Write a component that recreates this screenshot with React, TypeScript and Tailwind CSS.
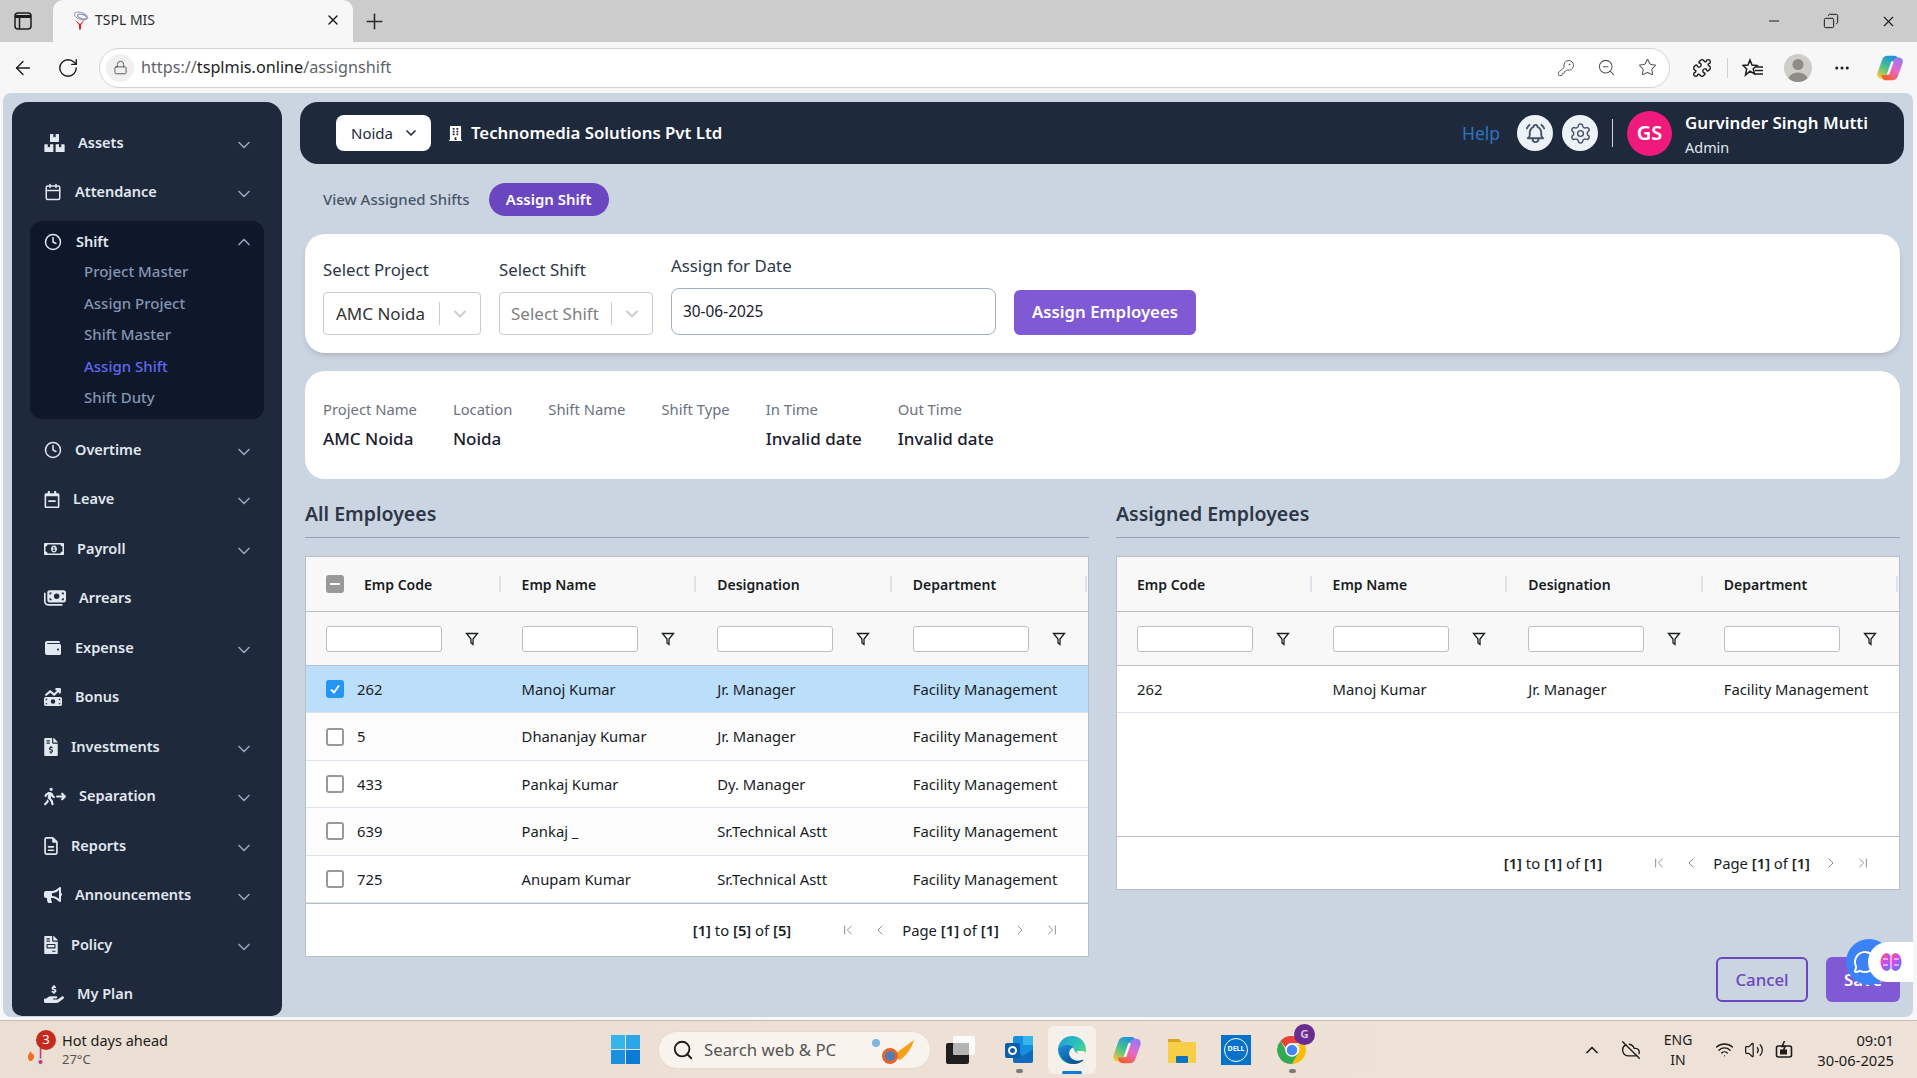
import { ReactNode } from 'react';
import {
  ArrowLeft,
  Calendar,
  ChevronDown,
  ChevronFirst,
  ChevronLast,
  ChevronLeft,
  ChevronRight,
  ChevronUp,
  Clock,
  CloudOff,
  Copy,
  KeyRound,
  Lock,
  MessageCircle,
  Minus,
  MoreHorizontal,
  Plus,
  Puzzle,
  RotateCw,
  Search,
  Settings,
  Star,
  Volume2,
  Wifi,
  X,
  ZoomOut,
} from 'lucide-react';
import { FaBoxes, FaBuilding, FaFileInvoice, FaFileInvoiceDollar, FaBullhorn, FaRegCalendarMinus, FaRegMoneyBillAlt, FaWallet } from 'react-icons/fa';
import { FaHandHoldingDollar, FaMoneyBills, FaMoneyBillTrendUp, FaPersonWalkingArrowRight, FaRegFileLines } from 'react-icons/fa6';
import { TbBellRinging } from 'react-icons/tb';

interface NavItem {
  label: string;
  icon: ReactNode;
  arrow?: boolean;
}

interface Employee {
  code: string;
  name: string;
  designation: string;
  department: string;
}

const iconClass = 'shrink-0 text-[#e2e8f0]';

const topItems: NavItem[] = [
  { label: 'Assets', icon: <FaBoxes className={`${iconClass} w-[21px] h-[18px]`} />, arrow: true },
  { label: 'Attendance', icon: <Calendar className={`${iconClass} w-[18px] h-[18px]`} strokeWidth={2} />, arrow: true },
];

const shiftLinks = ['Project Master', 'Assign Project', 'Shift Master', 'Assign Shift', 'Shift Duty'];

const bottomItems: NavItem[] = [
  { label: 'Overtime', icon: <Clock className={`${iconClass} w-[18px] h-[18px]`} />, arrow: true },
  { label: 'Leave', icon: <FaRegCalendarMinus className={`${iconClass} w-[16px] h-[17px]`} />, arrow: true },
  { label: 'Payroll', icon: <FaRegMoneyBillAlt className={`${iconClass} w-[20px] h-[18px]`} />, arrow: true },
  { label: 'Arrears', icon: <FaMoneyBills className={`${iconClass} w-[22px] h-[18px]`} /> },
  { label: 'Expense', icon: <FaWallet className={`${iconClass} w-[18px] h-[16px]`} />, arrow: true },
  { label: 'Bonus', icon: <FaMoneyBillTrendUp className={`${iconClass} w-[18px] h-[18px]`} /> },
  { label: 'Investments', icon: <FaFileInvoiceDollar className={`${iconClass} w-[14px] h-[18px]`} />, arrow: true },
  { label: 'Separation', icon: <FaPersonWalkingArrowRight className={`${iconClass} w-[22px] h-[19px]`} />, arrow: true },
  { label: 'Reports', icon: <FaRegFileLines className={`${iconClass} w-[14px] h-[18px]`} />, arrow: true },
  { label: 'Announcements', icon: <FaBullhorn className={`${iconClass} w-[18px] h-[18px]`} />, arrow: true },
  { label: 'Policy', icon: <FaFileInvoice className={`${iconClass} w-[14px] h-[18px]`} />, arrow: true },
  { label: 'My Plan', icon: <FaHandHoldingDollar className={`${iconClass} w-[20px] h-[18px]`} /> },
];

const allEmployees: Employee[] = [
  { code: '262', name: 'Manoj Kumar', designation: 'Jr. Manager', department: 'Facility Management' },
  { code: '5', name: 'Dhananjay Kumar', designation: 'Jr. Manager', department: 'Facility Management' },
  { code: '433', name: 'Pankaj Kumar', designation: 'Dy. Manager', department: 'Facility Management' },
  { code: '639', name: 'Pankaj _', designation: 'Sr.Technical Astt', department: 'Facility Management' },
  { code: '725', name: 'Anupam Kumar', designation: 'Sr.Technical Astt', department: 'Facility Management' },
];

const shiftInfo = [
  { label: 'Project Name', value: 'AMC Noida' },
  { label: 'Location', value: 'Noida' },
  { label: 'Shift Name', value: '' },
  { label: 'Shift Type', value: '' },
  { label: 'In Time', value: 'Invalid date' },
  { label: 'Out Time', value: 'Invalid date' },
];

function Favicon() {
  return (
    <svg viewBox="0 0 20 20" className="w-[20px] h-[20px] shrink-0" fill="none">
      <ellipse cx="10" cy="6" rx="7" ry="3.400" stroke="#9a9cc0" strokeWidth="1" transform="rotate(18 10 6)" />
      <ellipse cx="11" cy="6.500" rx="4.500" ry="2" stroke="#7d8cb8" strokeWidth="1" transform="rotate(18 11 6.500)" />
      <path d="M4 10l5 4 5-5-4 6v4.500H8V15z" fill="#e4202c" />
    </svg>
  );
}

function CopilotIcon({ size, id }: { size: string; id: string }) {
  return (
    <svg viewBox="0 0 32 32" className={size}>
      <defs>
        <linearGradient id={`${id}A`} x1="0.7" y1="0" x2="0.2" y2="1">
          <stop offset="0" stopColor="#1a8fe3" />
          <stop offset="0.55" stopColor="#4cc48a" />
          <stop offset="1" stopColor="#f5c83a" />
        </linearGradient>
        <linearGradient id={`${id}B`} x1="0.7" y1="0" x2="0.2" y2="1">
          <stop offset="0" stopColor="#f4602f" />
          <stop offset="0.5" stopColor="#e668cf" />
          <stop offset="1" stopColor="#8f7bf0" />
        </linearGradient>
      </defs>
      <path d="M13 2h8c2 0 3.500 1.500 4 3l1 3h-6c-1.500 0-2.500 1-3 2l-4 12-1 3c-.7 2-2 3-4 3H6C2.500 28 .8 25 1.500 22L7 6.500C8 3.500 10.500 2 13 2z" fill={`url(#${id}A)`} />
      <path d="M13 2h8c2 0 3.500 1.500 4 3l1 3h-6c-1.500 0-2.500 1-3 2l-4 12-1 3c-.7 2-2 3-4 3H6C2.500 28 .8 25 1.500 22L7 6.500C8 3.500 10.500 2 13 2z" fill={`url(#${id}B)`} transform="rotate(180 16 16)" />
      <path d="M19 9l-5 14" stroke="#fff" strokeWidth="2.500" opacity="0.8" />
    </svg>
  );
}

function EdgeIcon() {
  return (
    <svg viewBox="0 0 30 30" className="w-[30px] h-[30px]">
      <defs>
        <linearGradient id="edgeA" x1="0" y1="0" x2="1" y2="0.8">
          <stop offset="0" stopColor="#1f9cd8" />
          <stop offset="0.6" stopColor="#2fc6b4" />
          <stop offset="1" stopColor="#6fdc5c" />
        </linearGradient>
        <linearGradient id="edgeB" x1="0" y1="0" x2="0.6" y2="1">
          <stop offset="0" stopColor="#1c8fdc" />
          <stop offset="1" stopColor="#0b4f96" />
        </linearGradient>
      </defs>
      <circle cx="15" cy="15" r="14" fill="url(#edgeA)" />
      <path d="M1.500 14C2 21 7 29 17 29c4 0 8-1.500 10.500-5-3 1.500-7 2-10 1-4-1.500-6-5-5-8.500.5-2 2-3.500 4-4-1-1.500-3-2.500-5.500-2.500C6 10 2.500 11.500 1.500 14z" fill="url(#edgeB)" />
      <path d="M16.500 12.500c-2 .5-3.500 2-4 4-1 3.500 1 7 5 8.500 3 1 7 .5 10-1 1-1.500 1.500-3 1.500-5 0-1.500-1-3-4-3h-5c-.5 1 .5 2 2 2.500-3 0-5.500-3-5.500-6z" fill="#f7f0ea" />
    </svg>
  );
}

function ChromeIcon() {
  return (
    <svg viewBox="0 0 30 30" className="w-[30px] h-[30px]">
      <path d="M15 1a14 14 0 0 1 12.100 7H15a7 7 0 0 0-6.500 4.400L3.500 6A14 14 0 0 1 15 1z" fill="#e94335" />
      <path d="M27.100 8A14 14 0 0 1 15 29l6-10.500A7 7 0 0 0 21 10l6.100-2z" fill="#fbbc05" />
      <path d="M3.500 6l6 10.500A7 7 0 0 0 21 18.500L15 29A14 14 0 0 1 3.500 6z" fill="#34a853" />
      <circle cx="15" cy="15" r="6" fill="#4285f4" stroke="#fff" strokeWidth="1.500" />
    </svg>
  );
}

function FilterIcon() {
  return (
    <svg viewBox="0 0 14 14" className="w-[14px] h-[14px] shrink-0 text-[#181d1f]" fill="none" stroke="currentColor" strokeWidth="1.300">
      <path d="M1.500 1.500h11L8 7v5.500L6 11V7z" />
    </svg>
  );
}

function Checkbox({ state }: { state: 'empty' | 'checked' | 'mixed' }) {
  if (state === 'checked') {
    return (
      <span className="flex items-center justify-center w-[18px] h-[18px] rounded-[3px] bg-[#2196f3] shrink-0">
        <svg viewBox="0 0 14 14" className="w-[14px] h-[14px]" fill="none" stroke="#fff" strokeWidth="1.800">
          <path d="M3 7.500l3 3 5-7" />
        </svg>
      </span>
    );
  }
  if (state === 'mixed') {
    return (
      <span className="flex items-center justify-center w-[18px] h-[18px] rounded-[3px] bg-[#999] shrink-0">
        <span className="w-[10px] h-[2px] bg-white" />
      </span>
    );
  }
  return <span className="block w-[18px] h-[18px] rounded-[3px] border-2 border-[#999] bg-white shrink-0" />;
}

function EmployeeGrid({ rows, selectable, total, bodyHeight }: { rows: Employee[]; selectable: boolean; total: number; bodyHeight: string }) {
  const headers = ['Emp Code', 'Emp Name', 'Designation', 'Department'];
  return (
    <div className="border border-[#babfc7] bg-white text-[14.8px] text-[#181d1f] overflow-hidden">
      <div className="grid grid-cols-[195.6px_195.6px_195.6px_195.6px] h-[55px] bg-[#f8f8f8] border-b border-[#babfc7]">
        {headers.map((header, i) => (
          <div key={header} className="flex items-center justify-between pl-5 pr-[1px] text-[14px] font-semibold">
            <span className="flex items-center gap-[20px]">
              {selectable && i === 0 && <Checkbox state="mixed" />}
              {header}
            </span>
            <span className="w-[2px] h-4 bg-[#dde2eb]" />
          </div>
        ))}
      </div>
      <div className="grid grid-cols-[195.6px_195.6px_195.6px_195.6px] h-[54px] bg-[#f8f8f8] border-b border-[#babfc7]">
        {headers.map((header) => (
          <div key={header} className="flex items-center pl-5 gap-[23px]">
            <input className="w-[116px] h-[26px] bg-white border border-[#babfc7] rounded-[3px]" />
            <FilterIcon />
          </div>
        ))}
      </div>
      <div className={bodyHeight}>
        {rows.map((row, i) => (
          <div
            key={row.code}
            className={`grid grid-cols-[195.6px_195.6px_195.6px_195.6px] h-[47.4px] items-center border-b border-[#dde2eb] ${
              selectable && i === 0 ? 'bg-[#bbdefb]' : i % 2 === 1 && selectable ? 'bg-[#fcfcfc]' : 'bg-white'
            }`}
          >
            <div className="flex items-center pl-5 gap-[13px]">
              {selectable && <Checkbox state={i === 0 ? 'checked' : 'empty'} />}
              {row.code}
            </div>
            <div className="pl-5">{row.name}</div>
            <div className="pl-5">{row.designation}</div>
            <div className="pl-5 whitespace-nowrap">{row.department}</div>
          </div>
        ))}
      </div>
      <div className="flex items-center justify-end h-[53px] border-t border-[#babfc7] pr-[28px] text-[#181d1f]">
        <span>
          <b className="font-semibold">[1]</b> to <b className="font-semibold">[{total}]</b> of <b className="font-semibold">[{total}]</b>
        </span>
        <ChevronFirst className="w-[16px] h-[16px] ml-[49px] text-[#8b8f94]" strokeWidth={1.5} />
        <ChevronLeft className="w-[16px] h-[16px] ml-[16px] text-[#8b8f94]" strokeWidth={1.5} />
        <span className="ml-[14px]">
          Page <b className="font-semibold">[1]</b> of <b className="font-semibold">[1]</b>
        </span>
        <ChevronRight className="w-[16px] h-[16px] ml-[13px] text-[#8b8f94]" strokeWidth={1.5} />
        <ChevronLast className="w-[16px] h-[16px] ml-[16px] text-[#8b8f94]" strokeWidth={1.5} />
      </div>
    </div>
  );
}

function SelectBox({ text, width, muted, pad }: { text: string; width: string; muted?: boolean; pad: string }) {
  return (
    <div className={`flex items-center h-[43px] bg-white border border-[#cccccc] rounded-[4px] text-[17px] ${width} ${pad}`}>
      <span className={muted ? 'text-[#808080]' : 'text-[#333333]'}>{text}</span>
      <span className="ml-auto w-px h-[23px] bg-[#cccccc]" />
      <ChevronDown className="w-[20px] h-[20px] mx-[10px] text-[#cccccc]" strokeWidth={2.5} />
    </div>
  );
}

function NavRow({ item }: { item: NavItem }) {
  return (
    <div className="flex items-center justify-between h-[49.5px] pl-[32px] pr-[28px]">
      <span className="flex items-center gap-[13px] text-[14.5px] font-semibold text-[#e2e8f0]">
        {item.icon}
        {item.label}
      </span>
      {item.arrow && <ChevronDown className="w-[20px] h-[20px] mt-1 text-[#94a3b8]" />}
    </div>
  );
}

function Sidebar() {
  return (
    <aside className="w-[270px] shrink-0 bg-[#1e293b] rounded-t-[16px] rounded-b-[10px] overflow-hidden pt-[16px]">
      {topItems.map((item) => (
        <NavRow key={item.label} item={item} />
      ))}
      <div className="mx-[18px] mt-[4px] mb-[6px] h-[198px] rounded-[12px] bg-[#0f172a] pt-[8px]">
        <div className="flex items-center justify-between h-[25px] pl-[14px] pr-[10px]">
          <span className="flex items-center gap-[14px] text-[14.5px] font-semibold text-[#e2e8f0]">
            <Clock className="w-[18px] h-[18px]" />
            Shift
          </span>
          <ChevronUp className="w-[20px] h-[20px] text-[#94a3b8]" />
        </div>
        <div className="mt-[2px] pl-[54px]">
          {shiftLinks.map((link) => (
            <div key={link} className={`flex items-center h-[31.4px] text-[15px] font-medium ${link === 'Assign Shift' ? 'text-[#5f6af0]' : 'text-[#8496b0]'}`}>
              {link}
            </div>
          ))}
        </div>
      </div>
      {bottomItems.map((item) => (
        <NavRow key={item.label} item={item} />
      ))}
    </aside>
  );
}

function BrowserChrome() {
  return (
    <>
      <div className="flex items-end h-[42px] bg-[#cccccc] shrink-0">
        <svg viewBox="0 0 20 20" className="w-[20px] h-[20px] ml-[13px] mb-[11px] text-[#1c1c1c]" fill="none" stroke="currentColor" strokeWidth="1.500">
          <rect x="2" y="2" width="16" height="16" rx="3" />
          <path d="M2 5.500h16" strokeWidth="3" />
          <path d="M6.500 6v12" />
        </svg>
        <div className="flex items-center w-[300px] h-[42px] ml-[20px] rounded-t-[10px] bg-[#f7f7f7] pl-[18px] pr-[12px] pb-[3px]">
          <Favicon />
          <span className="ml-[4px] text-[14px] text-[#2b2b2b]">TSPL MIS</span>
          <X className="ml-auto w-[16px] h-[16px] text-[#1c1c1c]" />
        </div>
        <Plus className="w-[25px] h-[25px] ml-[9px] mb-[8px] text-[#2b2b2b]" strokeWidth={1.5} />
        <div className="flex items-center ml-auto h-[42px] pr-[20px] gap-[41px] text-[#1c1c1c]">
          <Minus className="w-[16px] h-[16px]" strokeWidth={1.5} />
          <Copy className="w-[16px] h-[16px] -scale-x-100" strokeWidth={1.5} />
          <X className="w-[17px] h-[17px]" strokeWidth={1.5} />
        </div>
      </div>
      <div className="flex items-center h-[51px] bg-[#f7f7f7] shrink-0 text-[#3b3b3b]">
        <ArrowLeft className="w-[22px] h-[22px] ml-[12px] text-[#1c1c1c]" strokeWidth={1.5} />
        <RotateCw className="w-[22px] h-[22px] ml-[23px] text-[#1c1c1c]" strokeWidth={1.5} />
        <div className="flex items-center w-[1571px] h-[40px] ml-[20px] bg-white border border-[#d4d4d4] rounded-full pl-[6px]">
          <span className="flex items-center justify-center w-[28px] h-[28px] rounded-full bg-[#f0f0f0]">
            <Lock className="w-[15px] h-[15px] text-[#555]" strokeWidth={1.5} />
          </span>
          <span className="ml-[7px] text-[16.2px] text-[#5f6368]">
            https://<span className="text-[#1c1c1c]">tsplmis.online</span>/assignshift
          </span>
          <div className="flex items-center gap-[22px] ml-auto pr-[12px] text-[#555]">
            <KeyRound className="w-[18px] h-[18px]" strokeWidth={1.3} />
            <ZoomOut className="w-[19px] h-[19px]" strokeWidth={1.3} />
            <Star className="w-[19px] h-[19px]" strokeWidth={1.3} />
          </div>
        </div>
        <Puzzle className="w-[20px] h-[20px] ml-[22px] text-[#1c1c1c]" strokeWidth={1.7} />
        <span className="w-px h-[20px] ml-[15px] bg-[#d0d0d0]" />
        <svg viewBox="0 0 22 20" className="w-[22px] h-[20px] ml-[14px] text-[#1c1c1c]" fill="none" stroke="currentColor" strokeWidth="1.500">
          <path d="M8 2l2 5 5 .5-3.800 3.200L12.500 16 8 13.200 3.500 17l1.200-6L1 7.500 6 7z" />
          <path d="M14 9h7M13 12.500h8M13 16h8" />
        </svg>
        <span className="flex items-end justify-center w-[28px] h-[28px] ml-[20px] rounded-full bg-[#cfcdc9] overflow-hidden">
          <svg viewBox="0 0 28 28" className="w-[28px] h-[28px]" fill="#8f8b86">
            <circle cx="14" cy="10.500" r="5.500" />
            <ellipse cx="14" cy="25" rx="9.500" ry="6.500" />
          </svg>
        </span>
        <MoreHorizontal className="w-[18px] h-[18px] ml-[21px] text-[#1c1c1c]" />
        <span className="ml-[25px]">
          <CopilotIcon size="w-[28px] h-[28px]" id="copTop" />
        </span>
      </div>
    </>
  );
}

function Taskbar() {
  return (
    <div className="flex items-center h-[58px] shrink-0 border-t border-[#c9bdb3] bg-gradient-to-r from-[#ebded2] via-[#eee0d4] to-[#eee2d8] text-[#1c1c1c]">
      <div className="relative flex items-center w-[611px] pl-[24px]">
        <svg viewBox="0 0 30 30" className="w-[30px] h-[30px] shrink-0 mt-[6px]">
          <path d="M5 22c-2-3-1-6 2-9 0 2 1 2 2 3 2 2 1 6-2 7-1 0-1.500 0-2-1z" fill="#f26b21" />
          <rect x="15" y="6" width="3" height="17" rx="1.500" fill="#c9dff5" />
          <rect x="15.800" y="10" width="1.500" height="13" fill="#e7304c" />
          <circle cx="16.500" cy="24" r="3.500" fill="#c9dff5" />
          <circle cx="16.500" cy="24" r="2" fill="#e7304c" />
        </svg>
        <span className="absolute left-[36px] top-[-2px] flex items-center justify-center w-[20px] h-[20px] rounded-full bg-[#c42b1c] text-white text-[13px]">3</span>
        <div className="ml-[8px] leading-none">
          <div className="text-[14.5px]">Hot days ahead</div>
          <div className="mt-[6px] text-[13px] text-[#555]">27°C</div>
        </div>
      </div>
      <svg viewBox="0 0 29 29" className="w-[29px] h-[29px] shrink-0">
        <rect x="0" y="0" width="14" height="14" fill="#35b6ea" />
        <rect x="15" y="0" width="14" height="14" fill="#2aa7e6" />
        <rect x="0" y="15" width="14" height="14" fill="#1b90e0" />
        <rect x="15" y="15" width="14" height="14" fill="#0b7cd6" />
      </svg>
      <div className="flex items-center w-[273px] h-[38px] ml-[18px] rounded-full bg-[#f9f3ee] border border-[#e6dcd3] pl-[13px]">
        <Search className="w-[22px] h-[22px] text-[#1c1c1c]" strokeWidth={2} />
        <span className="ml-[10px] text-[16.8px] text-[#555]">Search web &amp; PC</span>
        <svg viewBox="0 0 56 32" className="w-[56px] h-[32px] ml-auto mr-[8px]">
          <path d="M26 22L48 6c-2 8-8 16-14 20z" fill="#f7a11a" />
          <circle cx="24" cy="22" r="8" fill="#e8632c" />
          <circle cx="24" cy="22" r="5" fill="#4f7fb0" />
          <circle cx="10" cy="9" r="4" fill="#7fb4de" />
        </svg>
      </div>
      <div className="flex items-center justify-center w-[59px]">
        <svg viewBox="0 0 30 28" className="w-[30px] h-[28px]">
          <rect x="7" y="0" width="22" height="19" rx="2" fill="#fbfbfb" />
          <rect x="0" y="7" width="23" height="21" rx="2" fill="#1e1e1e" />
          <rect x="7" y="7" width="16" height="12" rx="1" fill="#b4b4b4" />
        </svg>
      </div>
      <div className="flex items-center justify-center w-[58px] flex-col relative">
        <svg viewBox="0 0 30 30" className="w-[30px] h-[30px]">
          <rect x="9" y="1" width="20" height="26" rx="2" fill="#1490df" />
          <rect x="19" y="1" width="10" height="9" fill="#35b6ea" />
          <path d="M9 14l10 7 10-7v12a2 2 0 0 1-2 2H11a2 2 0 0 1-2-2z" fill="#0f6cbd" />
          <rect x="1" y="8" width="15" height="15" rx="2" fill="#0a5ea8" />
          <circle cx="8.500" cy="15.500" r="3.500" fill="none" stroke="#fff" strokeWidth="2" />
        </svg>
        <span className="absolute bottom-[-8px] w-[7px] h-[4px] rounded-full bg-[#7a7a7a]" />
      </div>
      <div className="flex items-center justify-center w-[48px] h-[48px] rounded-[6px] bg-[#f7f0ea] relative">
        <EdgeIcon />
        <span className="absolute bottom-0 w-[20px] h-[3px] rounded-full bg-[#0b7cd6]" />
      </div>
      <div className="flex items-center justify-center w-[62px]">
        <CopilotIcon size="w-[30px] h-[30px]" id="copBar" />
      </div>
      <div className="flex items-center justify-center w-[47px]">
        <svg viewBox="0 0 30 30" className="w-[30px] h-[30px]">
          <path d="M1 4h11l3 3v4H1z" fill="#d9a521" />
          <rect x="1" y="7" width="28" height="21" rx="1" fill="#f7ce46" />
          <rect x="9" y="21" width="12" height="7" rx="1" fill="#1173c0" />
        </svg>
      </div>
      <div className="flex items-center justify-center w-[62px]">
        <span className="flex items-center justify-center w-[30px] h-[30px] bg-[#0672cb]">
          <span className="flex items-center justify-center w-[24px] h-[24px] rounded-full border border-white text-white text-[7px] font-bold">DELL</span>
        </span>
      </div>
      <div className="relative flex items-center justify-center w-[50px]">
        <ChromeIcon />
        <span className="absolute right-[2px] top-[-11px] flex items-center justify-center w-[21px] h-[21px] rounded-full bg-[#6a2c91] text-white/80 text-[11px] font-semibold">G</span>
        <span className="absolute bottom-[-8px] w-[7px] h-[4px] rounded-full bg-[#7a7a7a]" />
      </div>
      <div className="flex items-center ml-auto pr-[23px]">
        <ChevronUp className="w-[20px] h-[20px]" />
        <CloudOff className="w-[20px] h-[20px] ml-[19px]" strokeWidth={1.6} />
        <div className="ml-[23px] text-center text-[14px] leading-[20px]">
          <div>ENG</div>
          <div>IN</div>
        </div>
        <Wifi className="w-[19px] h-[19px] ml-[23px]" strokeWidth={1.7} />
        <Volume2 className="w-[20px] h-[20px] ml-[10px]" strokeWidth={1.5} />
        <svg viewBox="0 0 20 20" className="w-[20px] h-[20px] ml-[10px]" fill="none" stroke="currentColor" strokeWidth="1.600">
          <rect x="2.500" y="6" width="15" height="11" rx="2" />
          <path d="M10.500 1l-2.500 5.500h3L9 11.500" fill="none" />
          <rect x="6" y="9.500" width="7" height="5" fill="currentColor" stroke="none" />
        </svg>
        <div className="ml-[23px] text-right text-[14.7px] leading-[20px]">
          <div>09:01</div>
          <div>30-06-2025</div>
        </div>
      </div>
    </div>
  );
}

export default function App() {
  return (
    <div className="flex flex-col h-screen w-screen overflow-hidden bg-[#f7f7f7] font-['Noto_Sans',sans-serif]">
      <BrowserChrome />
      <div className="relative flex flex-1 min-h-0 gap-[18px] mr-[4px] ml-[3px] mb-[3px] rounded-lg bg-[#cbd5e1] pt-[9px] pb-[1px] pl-[9px] pr-[9px]">
        <Sidebar />
        <main className="flex-1 min-w-0">
          <header className="flex items-center h-[62px] rounded-[18px] bg-[#1e293b] pl-[36px] pr-[36px]">
            <div className="flex items-center justify-between w-[95px] h-[36px] rounded-lg bg-white pl-[15px] pr-[12px] text-[15px] text-[#1e293b]">
              Noida
              <ChevronDown className="w-[16px] h-[16px]" strokeWidth={2.5} />
            </div>
            <FaBuilding className="w-[13px] h-[17px] ml-[18px] text-white" />
            <span className="ml-[9px] text-[16.8px] font-semibold text-white">Technomedia Solutions Pvt Ltd</span>
            <span className="ml-auto text-[17.5px] text-[#2f74c0]">Help</span>
            <span className="flex items-center justify-center w-[36px] h-[36px] ml-[17px] rounded-full bg-[#edf2f7]">
              <TbBellRinging className="w-[23px] h-[23px] text-[#475569]" />
            </span>
            <span className="flex items-center justify-center w-[36px] h-[36px] ml-[9px] rounded-full bg-[#edf2f7]">
              <Settings className="w-[23px] h-[23px] text-[#475569]" strokeWidth={1.5} />
            </span>
            <span className="w-px h-[28px] mx-[14px] bg-white/80" />
            <span className="flex items-center justify-center w-[45px] h-[45px] rounded-full bg-[#f01a7c] text-white text-[20px] font-semibold">GS</span>
            <div className="ml-[13px] mt-[5px]">
              <div className="text-[16.9px] leading-[24px] font-semibold text-white">Gurvinder Singh Mutti</div>
              <div className="mt-px text-[14.4px] leading-[24px] text-[#e2e8f0]">Admin</div>
            </div>
          </header>

          <div className="flex items-center gap-[19px] mt-[19px] pl-[23px]">
            <span className="text-[15px] font-medium text-[#475569]">View Assigned Shifts</span>
            <span className="flex items-center justify-center w-[120px] h-[33px] rounded-full bg-[#6b46c1] text-[15px] font-semibold text-white">Assign Shift</span>
          </div>

          <section className="flex items-end gap-[18px] h-[119px] mt-[18px] ml-[5px] mr-[4px] rounded-[20px] bg-white px-[18px] pb-[18px] shadow-md">
            <div>
              <div className="mb-[10px] text-[16.8px] leading-[24px] text-[#2d3748]">Select Project</div>
              <SelectBox text="AMC Noida" width="w-[158px]" pad="pl-[12px]" />
            </div>
            <div>
              <div className="mb-[10px] text-[16.8px] leading-[24px] text-[#2d3748]">Select Shift</div>
              <SelectBox text="Select Shift" width="w-[154px]" muted pad="pl-[11px]" />
            </div>
            <div>
              <div className="mb-[10px] text-[16.8px] leading-[24px] text-[#2d3748]">Assign for Date</div>
              <div className="flex items-center w-[325px] h-[47px] rounded-lg border border-[#a0aec0] pl-[11px] text-[15.4px] text-[#1a202c]">30-06-2025</div>
            </div>
            <button className="w-[182px] h-[45px] rounded-[6px] bg-[#805ad5] pb-[2px] text-[16.8px] font-semibold text-white">Assign Employees</button>
          </section>

          <section className="flex gap-9 h-[108px] mt-[18px] ml-[5px] mr-[4px] rounded-[20px] bg-white px-[18px] pt-[27px]">
            {shiftInfo.map((info) => (
              <div key={info.label}>
                <div className="text-[14.8px] leading-[22px] text-[#6b7280] whitespace-nowrap">{info.label}</div>
                <div className="mt-[7px] text-[17px] leading-[24px] font-medium text-[#1a202c] whitespace-nowrap">{info.value}</div>
              </div>
            ))}
          </section>

          <div className="grid grid-cols-[784px_784px] gap-[27px] ml-[5px] mt-[18px]">
            <div>
              <h2 className="h-[41px] border-b border-[#94a3b8] text-[19.5px] leading-[34px] font-semibold text-[#2d3748]">All Employees</h2>
              <div className="mt-[18px]">
                <EmployeeGrid rows={allEmployees} selectable total={5} bodyHeight="h-[237px]" />
              </div>
            </div>
            <div>
              <h2 className="h-[41px] border-b border-[#94a3b8] text-[19.5px] leading-[34px] font-semibold text-[#2d3748]">Assigned Employees</h2>
              <div className="mt-[18px]">
                <EmployeeGrid rows={allEmployees.slice(0, 1)} selectable={false} total={1} bodyHeight="h-[170px]" />
              </div>
            </div>
          </div>

          <div className="flex justify-end gap-[18px] mr-[4px]">
            <button className="w-[92px] h-[45px] rounded-[6px] border-2 border-[#6b46c1] text-[16.8px] font-medium text-[#6b46c1]">Cancel</button>
            <button className="w-[74px] h-[45px] rounded-[6px] bg-[#805ad5] text-[16.8px] font-semibold text-white">Save</button>
          </div>
        </main>

        <span className="absolute right-[21px] bottom-[32px] flex items-center w-[46px] h-[46px] rounded-full bg-[#3b82f6] pl-[7px]">
          <MessageCircle className="w-[24px] h-[24px] text-white" strokeWidth={2} />
        </span>
        <span className="absolute right-0 bottom-[35px] flex items-center justify-center w-[45px] h-[40px] rounded-l-full bg-white pl-[1px]">
          <svg viewBox="0 0 22 20" className="w-[22px] h-[20px]">
            <defs>
              <linearGradient id="brainFill" x1="0" y1="0" x2="1" y2="1">
                <stop offset="0" stopColor="#f97316" />
                <stop offset="0.4" stopColor="#d946ef" />
                <stop offset="1" stopColor="#3b82f6" />
              </linearGradient>
            </defs>
            <ellipse cx="6.500" cy="10" rx="6" ry="9" fill="url(#brainFill)" />
            <ellipse cx="15.500" cy="10" rx="6" ry="9" fill="url(#brainFill)" />
            <path d="M11 1v18M3 7h5M3 13h5M14 7h5M14 13h5" stroke="#fff" strokeWidth="1" fill="none" />
          </svg>
        </span>
      </div>
      <Taskbar />
    </div>
  );
}
